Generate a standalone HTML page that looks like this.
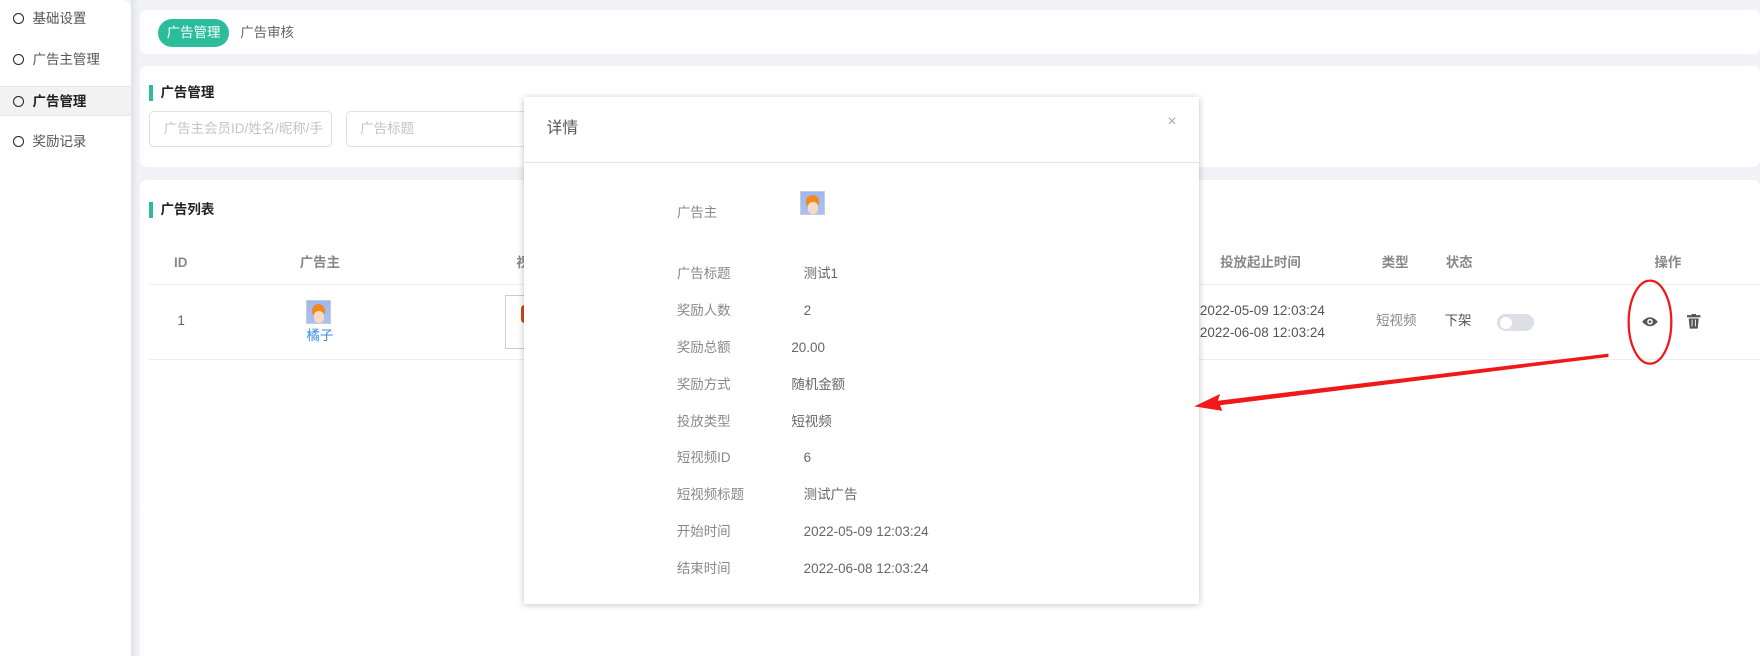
<!DOCTYPE html>
<html><head><meta charset="utf-8"><style>
*{margin:0;padding:0;box-sizing:border-box}
html,body{width:1760px;height:656px;overflow:hidden;background:#fff}
#w{width:1568px;height:584px;position:relative;zoom:1.12245;font-family:"Liberation Sans","Noto Sans CJK SC",sans-serif;font-size:12px;line-height:16px;color:#606266;background:#f0f2f5}
#w div{line-height:16px}
.a{position:absolute;white-space:nowrap}
.side{position:absolute;left:0;top:0;width:117px;height:584px;background:#fff;border-top-right-radius:8px}
#w .mi{position:absolute;left:0;width:117px;height:26px;line-height:26px;padding-left:29px;color:#555;font-size:12px}
.mi:before{content:"";position:absolute;left:12px;top:8px;width:8px;height:8px;border:1.5px solid #222;border-radius:50%}
.card{position:absolute;left:125px;right:0;background:#fff;border-radius:6px}
.tt{position:absolute;font-weight:bold;color:#222;font-size:12px;padding-left:10px}
.tt:before{content:"";position:absolute;left:0;top:1px;width:3px;height:14px;background:#2bbd9b}
#w .inp{position:absolute;height:32px;border:1px solid #dcdfe6;border-radius:4px;color:#c0c4cc;padding-left:12px;line-height:30px;overflow:hidden}
.h{position:absolute;top:226px;color:#888;font-weight:bold;font-size:12px}
.av{position:absolute;width:22px;height:22px;border:1px solid #ccc;background:linear-gradient(#9db8f0,#a8c0f5)}
.av:before{content:"";position:absolute;left:4px;top:3px;width:12px;height:10px;border-radius:6px 6px 2px 2px;background:#f08a1c}
.av:after{content:"";position:absolute;left:6px;top:9px;width:9px;height:11px;border-radius:4px;background:#f7d9c8}
.modal{position:absolute;left:467px;top:86px;width:601px;height:452px;background:#fff;box-shadow:0 1px 6px rgba(0,0,0,.25)}
.l{position:absolute;left:136px;color:#888}
.v{position:absolute;color:#666}
</style></head><body><div id="w">
<div class="side">
<div class="mi" style="top:4px">基础设置</div>
<div class="mi" style="top:40px">广告主管理</div>
<div class="mi" style="top:77px;background:#f2f2f2;color:#222;font-weight:bold;border-top:1px solid #e8e8e8;border-bottom:1px solid #e8e8e8">广告管理</div>
<div class="mi" style="top:113px">奖励记录</div>
</div>
<div style="position:absolute;left:117px;top:0;width:6px;height:584px;background:linear-gradient(90deg,#dfe1e6,#f0f2f5)"></div>
<div class="card" style="top:9px;height:39px">
<div class="a" style="left:16px;top:8px;width:63px;height:25px;border-radius:13px;background:#2bbd9b;color:#fff;line-height:25px!important;text-align:center">广告管理</div>
<div class="a" style="left:89px;top:12px;color:#666">广告审核</div>
</div>
<div class="card" style="top:59px;height:90px">
<div class="tt" style="left:8px;top:16px">广告管理</div>
<div class="inp" style="left:8px;top:40px;width:163px">广告主会员ID/姓名/昵称/手机</div>
<div class="inp" style="left:183px;top:40px;width:200px">广告标题</div>
</div>
<div class="card" style="top:160px;height:430px"><div class="tt" style="left:8px;top:19px">广告列表</div></div>
<div class="h" style="left:155px">ID</div>
<div class="h" style="left:267px">广告主</div>
<div class="h" style="left:460px">视</div>
<div class="h" style="left:1087px">投放起止时间</div>
<div class="h" style="left:1231px">类型</div>
<div class="h" style="left:1288px">状态</div>
<div class="h" style="left:1474px">操作</div>
<div class="a" style="left:133px;right:0;top:253px;height:1px;background:#ebeef5"></div>
<div class="a" style="left:133px;right:0;top:320px;height:1px;background:#ebeef5"></div>
<div class="a" style="left:158px;top:278px;color:#666">1</div>
<div class="av" style="left:273px;top:267px"></div>
<div class="a" style="left:273px;top:291px;color:#3a8ee6">橘子</div>
<div class="a" style="left:450px;top:263px;width:30px;height:48px;border:1px solid #ccc"><div style="position:absolute;left:13px;top:8px;width:8px;height:16px;background:#c9501b;border-radius:3px"></div></div>
<div class="a" style="left:1069px;top:269px;color:#555">2022-05-09 12:03:24</div>
<div class="a" style="left:1069px;top:289px;color:#555">2022-06-08 12:03:24</div>
<div class="a" style="left:1226px;top:278px;color:#888">短视频</div>
<div class="a" style="left:1287px;top:278px;color:#555">下架</div>
<div class="a" style="left:1334px;top:280px;width:33px;height:15px;border-radius:8px;background:#dcdfe6"><div style="position:absolute;left:2px;top:2px;width:11px;height:11px;border-radius:50%;background:#fff"></div></div>
<svg class="a" style="left:1462px;top:281px" width="16" height="12" viewBox="0 0 16 12"><path d="M1 6Q8-2 15 6Q8 14 1 6Z" fill="#555"/><circle cx="8" cy="6" r="2.5" fill="#fff"/><circle cx="8" cy="6" r="1.2" fill="#555"/></svg>
<svg class="a" style="left:1503px;top:280px" width="12" height="13" viewBox="0 0 12 13"><rect x="0" y="1" width="12" height="2" fill="#555"/><rect x="4" y="0" width="4" height="2" fill="#555"/><path d="M1.5 4h9l-1 9h-7z" fill="#555"/><path d="M4.5 5v6M7.5 5v6" stroke="#fff" stroke-width=".8"/></svg>
<div class="modal">
<div class="a" style="left:20px;top:21px;font-size:14px;color:#555">详情</div>
<div class="a" style="left:573px;top:15px;font-size:14px;color:#aaa">×</div>
<div class="a" style="left:0;right:0;top:58px;height:1px;background:#e2e1ee"></div>
<div class="l" style="top:96px">广告主</div><div class="av" style="left:246px;top:84px"></div>
<div class="l" style="top:150px">广告标题</div><div class="v" style="left:249px;top:150px">测试1</div>
<div class="l" style="top:183px">奖励人数</div><div class="v" style="left:249px;top:183px">2</div>
<div class="l" style="top:216px">奖励总额</div><div class="v" style="left:238px;top:216px">20.00</div>
<div class="l" style="top:249px">奖励方式</div><div class="v" style="left:238px;top:249px">随机金额</div>
<div class="l" style="top:282px">投放类型</div><div class="v" style="left:238px;top:282px">短视频</div>
<div class="l" style="top:314px">短视频ID</div><div class="v" style="left:249px;top:314px">6</div>
<div class="l" style="top:347px">短视频标题</div><div class="v" style="left:249px;top:347px">测试广告</div>
<div class="l" style="top:380px">开始时间</div><div class="v" style="left:249px;top:380px">2022-05-09 12:03:24</div>
<div class="l" style="top:413px">结束时间</div><div class="v" style="left:249px;top:413px">2022-06-08 12:03:24</div>
</div>
<svg class="a" style="left:0;top:0" width="1568" height="584"><ellipse cx="1470" cy="287" rx="19" ry="37" fill="none" stroke="#f01818" stroke-width="2"/><path d="M1433 315L1085 357L1087 351L1064 362L1089 366L1087 361L1433 318Z" fill="#f01818"/></svg>
</div></body></html>
